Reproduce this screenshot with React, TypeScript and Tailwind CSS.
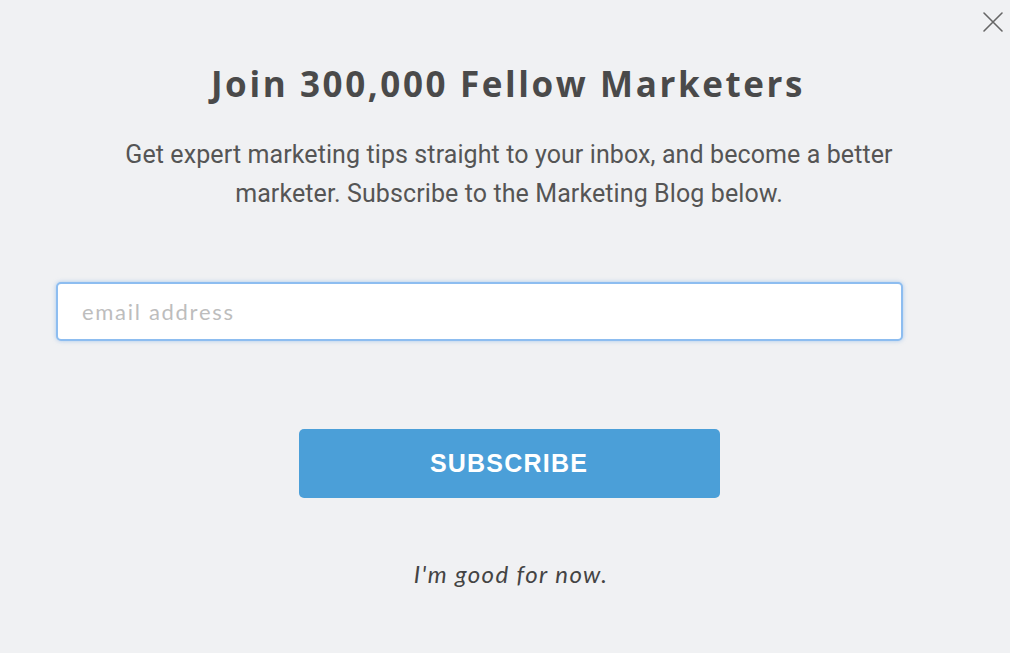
import React from "react";

export default function App() {
  return (
    <div className="relative w-[1010px] h-[653px] bg-[#f0f1f3] overflow-hidden font-['Lato','Noto_Sans',sans-serif]">
      {/* close button */}
      <button className="absolute right-[6px] top-[11px] w-[22px] h-[22px] text-[#666]" aria-label="close">
        <svg viewBox="0 0 22 22" width="22" height="22" fill="none" stroke="currentColor" strokeWidth="1.6" strokeLinecap="round">
          <path d="M2 2 L20 20 M20 2 L2 20" />
        </svg>
      </button>

      <div className="flex flex-col">
        <h1 className="mt-[62px] text-center text-[35px] leading-[44px] font-bold tracking-[2.6px] text-[#4a4a4a] font-['Open_Sans',sans-serif] translate-x-[3px]">
          Join 300,000 Fellow Marketers
        </h1>

        <p className="mt-[29px] mx-auto w-[790px] text-center text-[25px] leading-[39px] text-[#555] tracking-[0.1px] font-['Roboto',sans-serif] translate-x-[4px]">
          Get expert marketing tips straight to your inbox, and become a better marketer. Subscribe to the Marketing Blog below.
        </p>

        <input
          type="email"
          placeholder="email address"
          className="mt-[69px] ml-[56px] w-[847px] h-[59px] rounded-[5px] border-2 border-[#8dbdf0] bg-white px-[24px] text-[22px] tracking-[1.7px] text-[#444] placeholder:text-[#bdbdbd] shadow-[0_0_4px_rgba(110,165,230,0.55)] outline-none"
        />

        <button className="mt-[88px] mx-auto w-[421px] h-[69px] rounded-[5px] bg-[#4b9fd8] text-white text-[25px] font-bold tracking-[1.2px] font-['Liberation_Sans',Arial,sans-serif] translate-x-[4px]">
          SUBSCRIBE
        </button>

        <a className="mt-[58px] text-center text-[24px] italic text-[#444] tracking-[1.4px] translate-x-[6px]">
          I'm good for now.
        </a>
      </div>
    </div>
  );
}
